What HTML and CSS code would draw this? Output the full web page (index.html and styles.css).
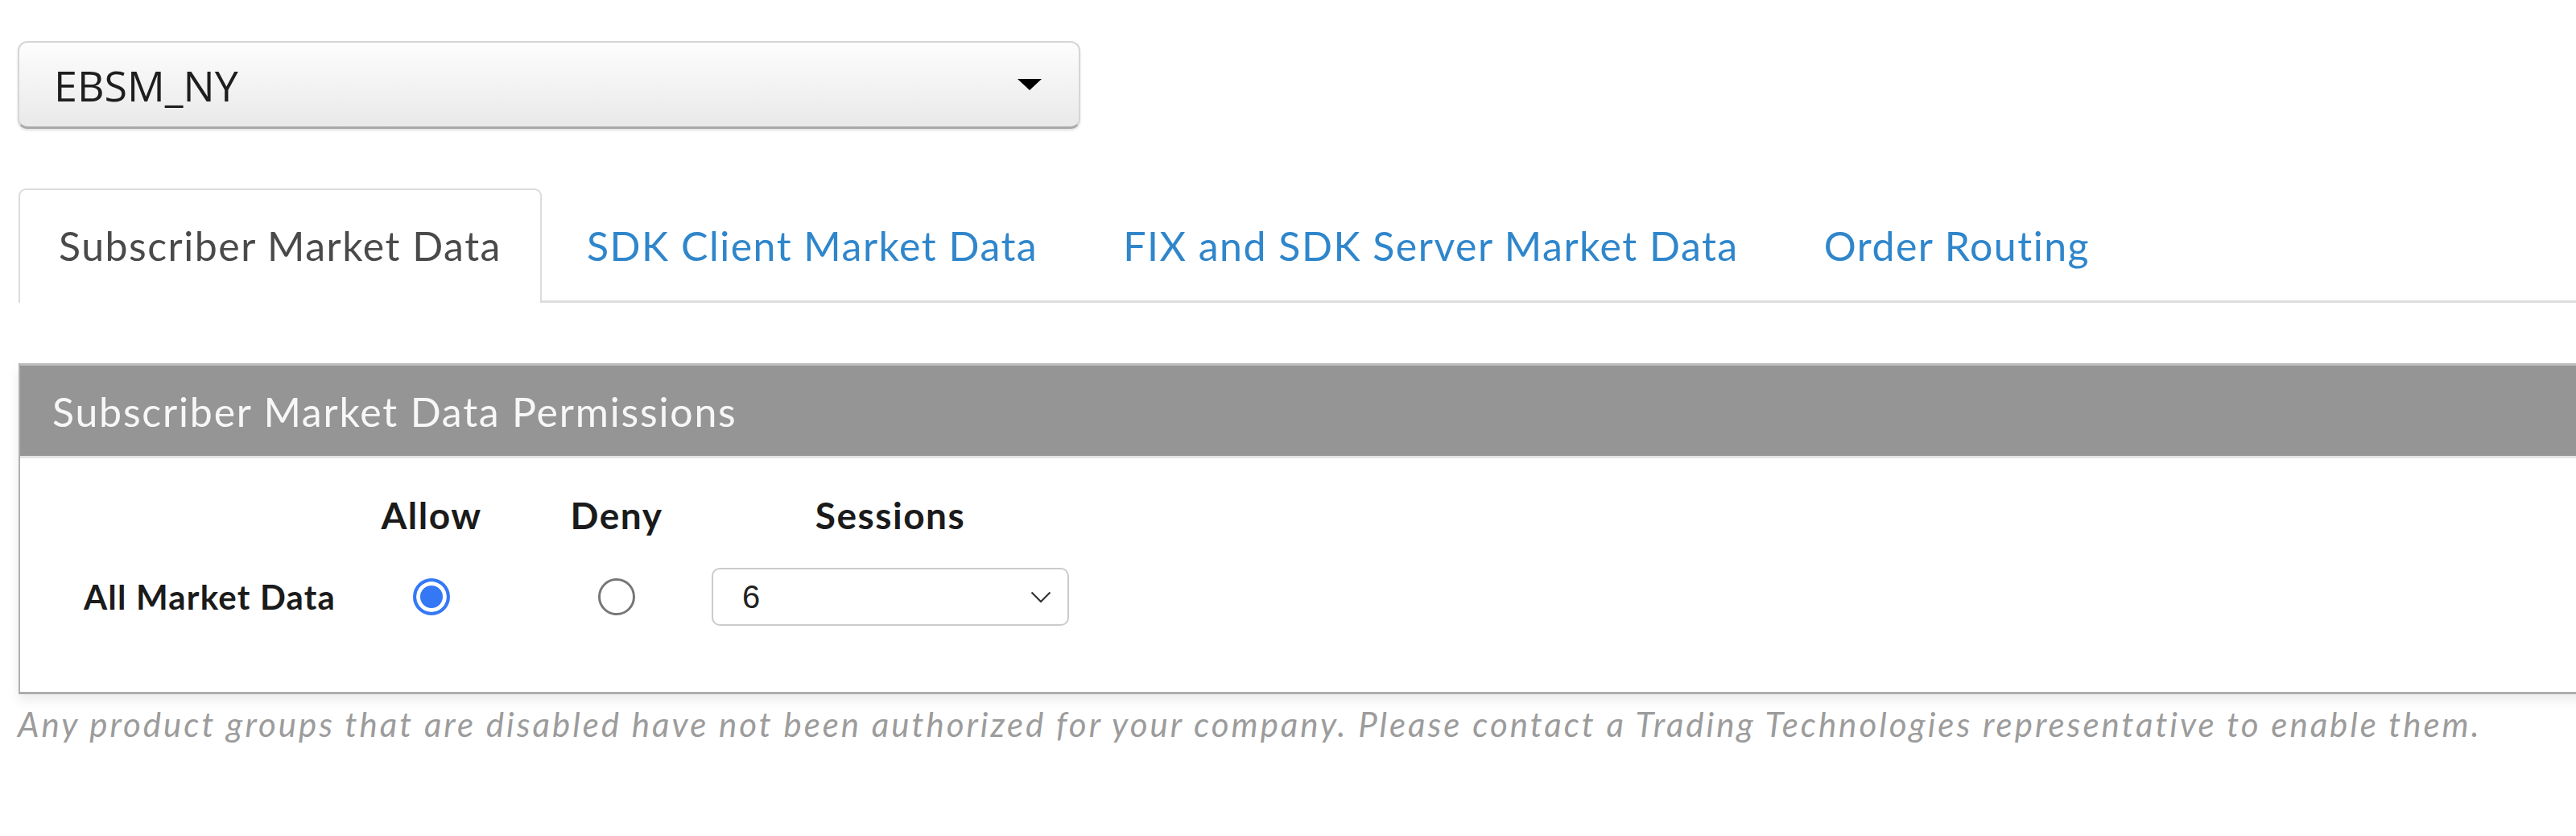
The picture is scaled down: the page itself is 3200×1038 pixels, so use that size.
FILE: index.html
```html
<!DOCTYPE html>
<html lang="en">
<head>
    <meta charset="UTF-8">
    <meta name="viewport" content="width=device-width, initial-scale=1.0">
    <title>Market Data Permissions</title>
    <link rel="stylesheet" href="styles.css">
</head>
<body>
    <div class="page">
        <div class="account-select">
            <span class="account-name">EBSM_NY</span>
            <span class="caret"></span>
        </div>

        <ul class="tabs">
            <li class="tab active">Subscriber Market Data</li>
            <li class="tab"><a href="#">SDK Client Market Data</a></li>
            <li class="tab"><a href="#">FIX and SDK Server Market Data</a></li>
            <li class="tab"><a href="#">Order Routing</a></li>
        </ul>

        <div class="panel">
            <div class="panel-heading">Subscriber Market Data Permissions</div>
            <div class="panel-body">
                <div class="perm-grid">
                    <div></div>
                    <div class="col-head">Allow</div>
                    <div class="col-head">Deny</div>
                    <div class="col-head">Sessions</div>

                    <div class="row-label">All Market Data</div>
                    <div class="cell"><span class="radio checked"></span></div>
                    <div class="cell"><span class="radio"></span></div>
                    <div class="cell">
                        <div class="sessions">
                            <span>6</span>
                            <svg class="chevron" width="26" height="15" viewBox="0 0 26 15">
                                <polyline points="1.5,1.5 13,13 24.5,1.5" fill="none" stroke="#333" stroke-width="2.2"/>
                            </svg>
                        </div>
                    </div>
                </div>
            </div>
        </div>

        <p class="note">Any product groups that are disabled have not been authorized for your company. Please contact a Trading Technologies representative to enable them.</p>
    </div>
</body>
</html>
```

FILE: styles.css
```css
html, body {
    margin: 0;
    padding: 0;
    overflow: hidden;
    background: #fff;
}
.page {
    width: 3300px;
    padding: 51px 0 0 22px;
    font-family: 'Lato', sans-serif;
}

/* account dropdown */
.account-select {
    width: 1320px;
    height: 109px;
    box-sizing: border-box;
    display: flex;
    align-items: center;
    justify-content: space-between;
    padding: 0 46px 0 43px;
    border: 2px solid #d6d6d6;
    border-bottom: 3px solid #a9a9a9;
    border-radius: 12px;
    background: linear-gradient(#fdfdfd, #e9e9e9);
    box-shadow: 0 2px 3px rgba(0, 0, 0, 0.12);
}
.account-name {
    font-family: 'Open Sans', sans-serif;
    font-size: 52px;
    color: #1e1e1e;
}
.caret {
    width: 0;
    height: 0;
    border-left: 15px solid transparent;
    border-right: 15px solid transparent;
    border-top: 14px solid #000;
}

/* tabs */
.tabs {
    list-style: none;
    margin: 74px 0 0 1px;
    padding: 0;
    display: flex;
    border-bottom: 3px solid #dedede;
}
.tab {
    padding: 39px 48px 38px;
    margin-right: 6px;
    margin-bottom: -3px;
    font-size: 50px;
    line-height: 60px;
    letter-spacing: 1.5px;
    border: 2px solid transparent;
    border-bottom: none;
}
.tab a {
    color: #2f86cb;
    text-decoration: none;
}
.tab.active {
    color: #4a4a4a;
    background: #fff;
    border-color: #dcdcdc;
    border-radius: 9px 9px 0 0;
    padding-bottom: 41px;
}

/* panel */
.panel {
    margin: 75px 0 0 1px;
    border-left: 2px solid #b0b0b0;
    border-bottom: 3px solid #adadad;
    box-shadow: 0 8px 14px rgba(0, 0, 0, 0.08);
}
.panel-heading {
    background: #959595;
    border-top: 3px solid #bdbdbd;
    border-bottom: 3px solid #e4e4e4;
    color: #f7f7f7;
    font-size: 50px;
    letter-spacing: 1.8px;
    line-height: 60px;
    padding: 27px 40px 25px;
}
.panel-body {
    padding: 43px 0 82px 79px;
}
.perm-grid {
    display: grid;
    grid-template-columns: 314px 224px 224px 444px;
    column-gap: 6px;
    row-gap: 37px;
    align-items: center;
}
.col-head {
    text-align: center;
    font-weight: 700;
    font-size: 46px;
    letter-spacing: 1.5px;
    line-height: 56px;
    color: #1b1b1b;
}
.row-label {
    font-weight: 700;
    font-size: 42px;
    letter-spacing: 1.2px;
    color: #1b1b1b;
}
.cell {
    display: flex;
    justify-content: center;
}
.radio {
    width: 46px;
    height: 46px;
    box-sizing: border-box;
    border-radius: 50%;
    border: 3px solid #777;
    background: #fff;
}
.radio.checked {
    border: 4px solid #3478f6;
    background: #3478f6;
    box-shadow: inset 0 0 0 5px #fff;
}
.sessions {
    width: 444px;
    height: 72px;
    box-sizing: border-box;
    border: 2px solid #cbcbcb;
    border-radius: 10px;
    display: flex;
    align-items: center;
    justify-content: space-between;
    padding: 0 20px 0 36px;
    font-family: 'Liberation Sans', sans-serif;
    font-size: 40px;
    color: #222;
}

.note {
    margin: 12px 0 0 0;
    font-style: italic;
    font-size: 42px;
    letter-spacing: 3px;
    color: #9c9c9c;
}
```
